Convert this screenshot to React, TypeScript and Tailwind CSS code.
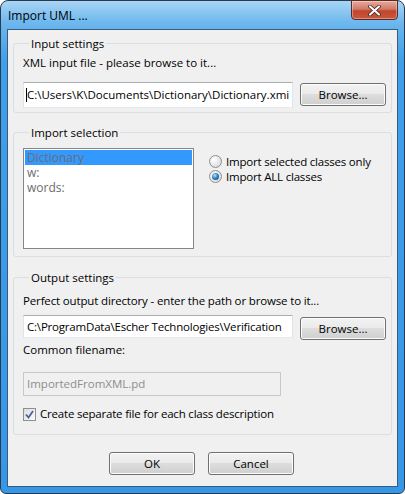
import React from 'react';

function WinButton({ label, className = '' }: { label: string; className?: string }) {
  return (
    <button
      className={`h-[23px] w-[86px] rounded-[3px] border border-[#707070] bg-[linear-gradient(#f2f2f2_0%,#ebebeb_45%,#dddddd_50%,#cfcfcf_100%)] shadow-[inset_0_0_0_1px_#fcfcfc] text-black ${className}`}
    >
      {label}
    </button>
  );
}

function Radio({ checked, label }: { checked?: boolean; label: string }) {
  return (
    <label className="flex items-center gap-[4px] h-[15px]">
      <span className="w-[13px] h-[13px] rounded-full border border-[#8e8f8f] bg-[radial-gradient(circle_at_35%_35%,#ffffff_0%,#e0e0e0_70%,#c8c8c8_100%)] flex items-center justify-center">
        {checked && (
          <span className="w-[7px] h-[7px] rounded-full bg-[radial-gradient(circle_at_40%_35%,#b8e4fb_0%,#2f86c5_45%,#0d3a66_100%)]" />
        )}
      </span>
      <span className="tracking-[-0.2px]">{label}</span>
    </label>
  );
}

export default function App() {
  return (
    <div className="font-['Segoe_UI','Open_Sans',sans-serif] text-[11.5px] leading-[14px] text-black">
      <div className="w-[405px] h-[494px] flex flex-col rounded-t-[8px] rounded-b-[6px] border border-[#2a3a4e] bg-[linear-gradient(180deg,#a9d5f5_0px,#6cb7ee_22px,#409fe9_60px,#3797e7_100%)] px-[6px] pb-[6px]">
        <div className="h-[28px] flex items-start justify-between">
          <span className="mt-[8px] pl-[1px] text-[12px]">Import UML ...</span>
          <div className="-mt-px w-[47px] h-[20px] rounded-b-[4px] border border-[#5a2a24] bg-[linear-gradient(#e8aa9c_0%,#d07a68_45%,#c2452d_55%,#c8583c_100%)] shadow-[inset_0_0_0_1px_rgba(255,255,255,0.35)] flex items-center justify-center">
            <svg width="13" height="11" viewBox="0 0 13 11">
              <path d="M2 1.5 L11 9.5 M11 1.5 L2 9.5" stroke="#3a1a14" strokeWidth="3.6" strokeLinecap="round" />
              <path d="M2 1.5 L11 9.5 M11 1.5 L2 9.5" stroke="#ffffff" strokeWidth="2.2" strokeLinecap="round" />
            </svg>
          </div>
        </div>

        <div className="flex-1 flex flex-col border border-[#3a5b7c] bg-[#f0f0f0] px-[5px] pt-[6px]">
          <fieldset className="border border-[#d5dfe5] rounded-[3px] px-[9px] pr-[5px] pb-[4px]">
            <legend className="ml-[6px] px-[2px] leading-[15px]">Input settings</legend>
            <div className="mt-[5px]">XML input file - please browse to it...</div>
            <div className="mt-[12px] flex items-start gap-[7px]">
              <div className="w-[270px] h-[26px] border border-[#abadb3] border-b-[#e3e9ef] border-x-[#e2e3ea] bg-white flex items-center pl-[2px] whitespace-nowrap overflow-hidden">
                <span className="w-px h-[14px] bg-black" />
                <span>C:\Users\K\Documents\Dictionary\Dictionary.xmi</span>
              </div>
              <WinButton label="Browse..." className="mt-px" />
            </div>
          </fieldset>

          <fieldset className="mt-[12px] border border-[#d5dfe5] rounded-[3px] px-[9px] pb-[7px]">
            <legend className="ml-[6px] px-[2px] leading-[15px]">Import selection</legend>
            <div className="mt-[8px] flex items-start gap-[15px]">
              <div className="w-[171px] h-[101px] border border-[#828790] bg-white p-px text-[#6d6d6d] text-[12px] leading-[15px]">
                <div className="h-[15px] bg-[#3399ff] pl-[2px]">Dictionary</div>
                <div className="h-[15px] pl-[2px]">w:</div>
                <div className="h-[15px] pl-[2px]">words:</div>
              </div>
              <div className="mt-[6px] flex flex-col">
                <Radio label="Import selected classes only" />
                <Radio checked label="Import ALL classes" />
              </div>
            </div>
          </fieldset>

          <fieldset className="mt-[13px] border border-[#d5dfe5] rounded-[3px] px-[9px] pr-[5px] pb-[13px]">
            <legend className="ml-[6px] px-[2px] leading-[15px]">Output settings</legend>
            <div className="mt-[9px] tracking-[-0.15px]">Perfect output directory - enter the path or browse to it...</div>
            <div className="mt-[7px] flex items-start gap-[7px]">
              <div className="w-[270px] h-[23px] border border-[#abadb3] border-b-[#e3e9ef] border-x-[#e2e3ea] bg-white flex items-center pl-[3px] whitespace-nowrap overflow-hidden tracking-[-0.2px]">
                C:\ProgramData\Escher Technologies\Verification
              </div>
              <WinButton label="Browse..." className="mt-[2px]" />
            </div>
            <div className="mt-[3px]">Common filename:</div>
            <div className="mt-[15px] w-[258px] h-[24px] border border-[#c9c9c9] bg-[#f0f0f0] text-[#8d8d8d] flex items-center pl-[3px]">
              ImportedFromXML.pd
            </div>
            <label className="mt-[11px] flex items-center gap-[4px] h-[14px]">
              <span className="w-[13px] h-[13px] border border-[#8e8f8f] bg-[linear-gradient(135deg,#dcdcdc,#fbfbfb)] flex items-center justify-center">
                <svg width="9" height="9" viewBox="0 0 9 9">
                  <path d="M1 4.5 L3.5 7.5 L8 1" fill="none" stroke="#4c61a1" strokeWidth="1.8" />
                </svg>
              </span>
              <span className="tracking-[-0.2px]">Create separate file for each class description</span>
            </label>
          </fieldset>

          <div className="mt-[17px] flex justify-center gap-[13px] pr-[2px]">
            <WinButton label="OK" />
            <WinButton label="Cancel" />
          </div>
        </div>
      </div>
    </div>
  );
}
